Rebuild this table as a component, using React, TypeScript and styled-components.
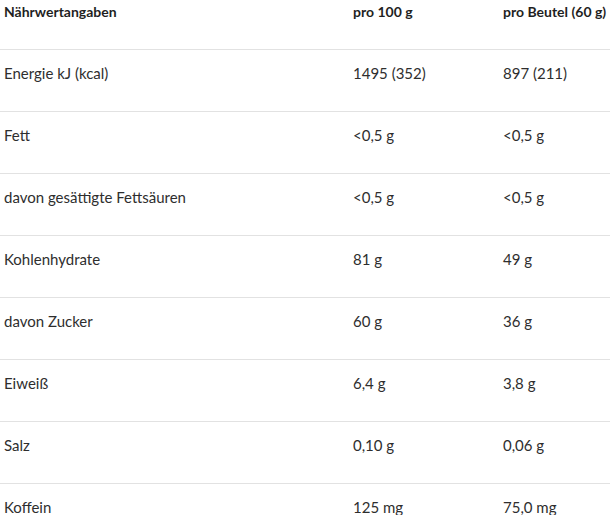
import React from 'react';
import styled, { createGlobalStyle } from 'styled-components';

const GlobalStyle = createGlobalStyle`
  body {
    margin: 0;
    background: #fff;
    font-family: Lato, "Liberation Sans", sans-serif;
  }
`;

const Table = styled.div`
  display: grid;
  grid-template-columns: 349px 150px 1fr;
  width: 610px;
  overflow: hidden;
`;

const Cell = styled.div<{ $head?: boolean }>`
  padding: ${(p) => (p.$head ? '2px 4px 27px' : '13px 4px 28px')};
  line-height: 20px;
  font-size: ${(p) => (p.$head ? '14px' : '15px')};
  font-weight: ${(p) => (p.$head ? 700 : 400)};
  color: ${(p) => (p.$head ? '#1f1f1f' : '#2e2e2e')};
  border-bottom: 1px solid #e2e2e2;
  white-space: nowrap;
`;

const rows: [string, string, string][] = [
  ['Energie kJ (kcal)', '1495 (352)', '897 (211)'],
  ['Fett', '<0,5 g', '<0,5 g'],
  ['davon gesättigte Fettsäuren', '<0,5 g', '<0,5 g'],
  ['Kohlenhydrate', '81 g', '49 g'],
  ['davon Zucker', '60 g', '36 g'],
  ['Eiweiß', '6,4 g', '3,8 g'],
  ['Salz', '0,10 g', '0,06 g'],
  ['Koffein', '125 mg', '75,0 mg'],
];

export default function App() {
  return (
    <>
      <GlobalStyle />
      <Table>
        <Cell $head>Nährwertangaben</Cell>
        <Cell $head>pro 100 g</Cell>
        <Cell $head>pro Beutel (60 g)</Cell>
        {rows.map((r) =>
          r.map((v, i) => <Cell key={r[0] + i}>{v}</Cell>)
        )}
      </Table>
    </>
  );
}
